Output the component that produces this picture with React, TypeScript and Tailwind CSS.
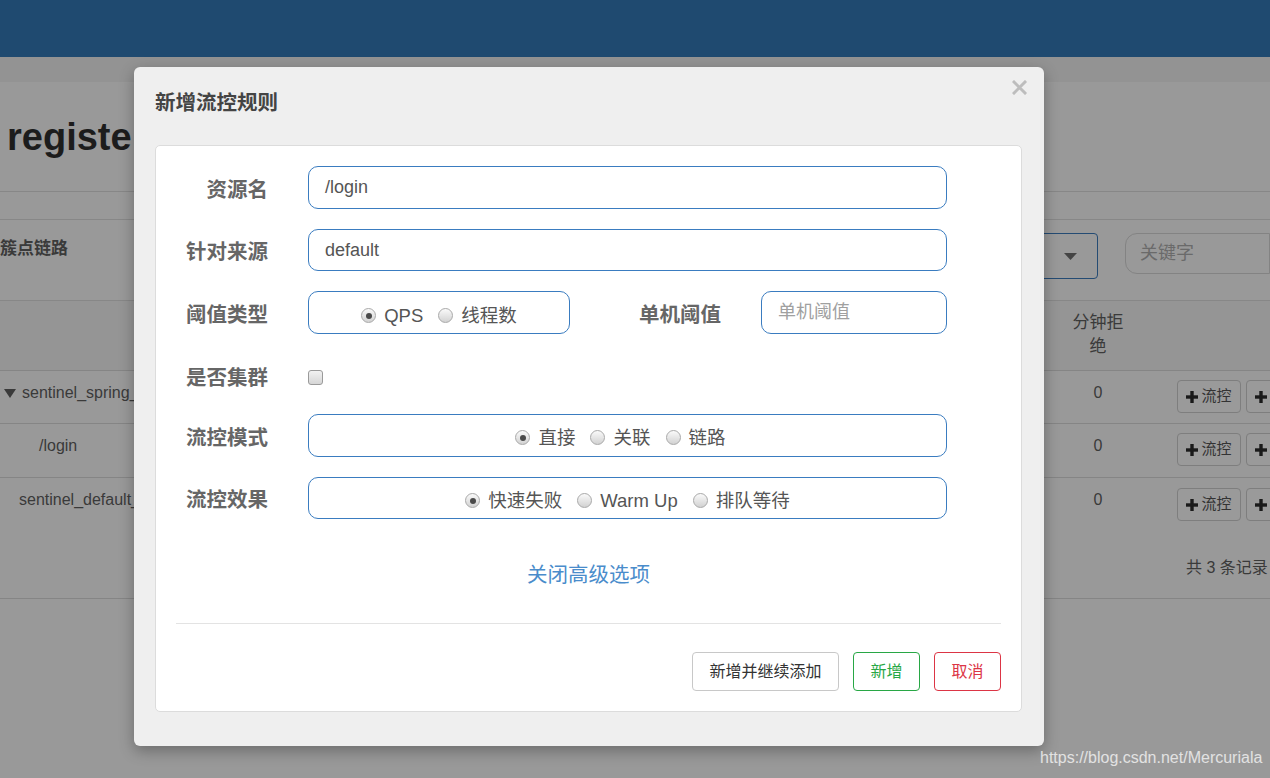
import React from "react";

const FONT = "font-['Liberation_Sans','Noto_Sans_CJK_SC',sans-serif]";

function Radio({ checked }: { checked?: boolean }) {
  return (
    <span className="inline-flex w-[15px] h-[15px] rounded-full border border-[#a9a9a9] bg-linear-to-b from-[#fafafa] to-[#d2d2d2] items-center justify-center shrink-0">
      {checked && <span className="w-[6px] h-[6px] rounded-full bg-[#4a4a4a]" />}
    </span>
  );
}

function Opt({ label, checked }: { label: string; checked?: boolean }) {
  return (
    <span className="inline-flex items-center gap-[8px]">
      <Radio checked={checked} />
      <span className="text-[18.5px] text-[#555]">{label}</span>
    </span>
  );
}

function Label({ children, w = "w-[112px]" }: { children: React.ReactNode; w?: string }) {
  return (
    <div className={`${w} shrink-0 text-right text-[20.5px] leading-[28px] font-bold text-[#666] pt-[4px]`}>{children}</div>
  );
}

function PlusBtn() {
  return (
    <span className="inline-flex items-center gap-[3px] h-[33px] w-[64px] justify-center border border-[#7e7e7e] rounded-[4px] bg-[#9a9a9a] shrink-0">
      <svg width="12" height="12" viewBox="0 0 12 12">
        <rect x="4.3" y="0" width="3.4" height="12" fill="#1a1a1a" />
        <rect x="0" y="4.3" width="12" height="3.4" fill="#1a1a1a" />
      </svg>
      <span className="text-[15px] text-[#333]">流控</span>
    </span>
  );
}

function TableRow({ h, name, pl }: { h: string; name: string; pl: string }) {
  return (
    <div className={`flex ${h} border-b border-[#858585]`}>
      <div className={`flex-1 ${pl} pt-[12px] text-[16px] text-[#3a3a3a] leading-[20px] flex items-start gap-[6px]`}>
        {name === "sentinel_spring_web" ? (
          <>
            <svg width="12" height="10" viewBox="0 0 12 10" className="mt-[6px]">
              <polygon points="0,0 12,0 6,9" fill="#3a3a3a" />
            </svg>
            <span>sentinel_spring_web_context</span>
          </>
        ) : (
          <span>{name}</span>
        )}
      </div>
      <div className="w-[74px] text-center pt-[12px] text-[16px] leading-[20px] text-[#3a3a3a]">0</div>
      <div className="w-[135px] pl-[42px] pt-[9px] flex gap-[5px] overflow-hidden">
        <PlusBtn />
        <PlusBtn />
      </div>
    </div>
  );
}

export default function App() {
  return (
    <div className={`relative w-[1270px] h-[778px] overflow-hidden bg-[#999999] ${FONT}`}>
      {/* background page (dimmed) */}
      <div className="h-[57px] bg-[#1f4a70]" />
      <div className="h-[25px] bg-[#939393]" />
      <div className="h-[110px] border-b border-[#878787] flex items-center pl-[7px] pt-[2px]">
        <span className="text-[38px] font-bold text-[#1c1c1c] whitespace-nowrap">registe</span>
      </div>
      <div className="h-[28px] border-b border-[#878787]" />
      <div className="h-[81px] border-b border-[#878787] flex">
        <div className="flex-1 pt-[19px] text-[17px] font-bold text-[#3a3a3a] leading-[20px]">簇点链路</div>
        <div className="pt-[13px] flex gap-[27px]">
          <div className="w-[120px] h-[46px] border border-[#244b73] rounded-[4px] flex items-center justify-end pr-[20px]">
            <svg width="13" height="7" viewBox="0 0 13 7">
              <polygon points="0,0 13,0 6.5,7" fill="#444" />
            </svg>
          </div>
          <div className="w-[145px] h-[41px] border border-[#838383] rounded-l-[12px] flex items-center pl-[14px] text-[18px] text-[#6a6a6a]">
            关键字
          </div>
        </div>
      </div>
      <div className="h-[70px] border-b border-[#858585] bg-[#959595] flex">
        <div className="flex-1" />
        <div className="w-[74px] pt-[10px] text-center text-[17px] leading-[24px] text-[#3a3a3a]">
          分钟拒
          <br />绝
        </div>
        <div className="w-[135px]" />
      </div>
      <TableRow h="h-[53px]" name="sentinel_spring_web" pl="pl-[4px]" />
      <TableRow h="h-[54px]" name="/login" pl="pl-[39px]" />
      <div className="h-[121px] border-b border-[#858585] flex flex-col">
        <div className="flex h-[60px]">
          <div className="flex-1 pl-[19px] pt-[12px] text-[16px] leading-[20px] text-[#3a3a3a]">sentinel_default_context</div>
          <div className="w-[74px] text-center pt-[12px] text-[16px] leading-[20px] text-[#3a3a3a]">0</div>
          <div className="w-[135px] pl-[42px] pt-[10px] flex gap-[5px] overflow-hidden">
            <PlusBtn />
            <PlusBtn />
          </div>
        </div>
        <div className="flex justify-end pt-[20px]">
          <span className="w-[84px] overflow-hidden whitespace-nowrap text-[16px] text-[#3a3a3a] leading-[20px]">共 3 条记录</span>
        </div>
      </div>

      {/* modal */}
      <div className="absolute left-[134px] top-[67px] w-[910px] h-[679px] bg-[#efefef] rounded-[6px] shadow-[0_5px_15px_rgba(0,0,0,0.3)] flex flex-col">
        <svg className="absolute right-[17px] top-[13px]" width="15" height="15" viewBox="0 0 15 15">
          <path d="M2 2 L13 13 M13 2 L2 13" stroke="#bdbdbd" strokeWidth="3" strokeLinecap="square" />
        </svg>
        <div className="h-[78px] pl-[21px] pt-[22px] text-[20.5px] leading-[28px] font-bold text-[#444]">新增流控规则</div>
        <div className="ml-[21px] mr-[22px] h-[567px] bg-white border border-[#dcdcdc] rounded-[5px] flex flex-col pt-[20px]">
          {/* row 1 */}
          <div className="flex h-[43px] items-center">
            <Label>资源名</Label>
            <div className="ml-[40px] w-[639px] h-[43px] border border-[#3a7cc0] rounded-[10px] flex items-center pl-[16px] text-[18px] text-[#555]">
              /login
            </div>
          </div>
          {/* row 2 */}
          <div className="flex h-[42px] items-center mt-[20px]">
            <Label>针对来源</Label>
            <div className="ml-[40px] w-[639px] h-[42px] border border-[#3a7cc0] rounded-[10px] flex items-center pl-[16px] text-[18px] text-[#555]">
              default
            </div>
          </div>
          {/* row 3 */}
          <div className="flex h-[43px] items-center mt-[20px]">
            <Label>阈值类型</Label>
            <div className="ml-[40px] w-[262px] h-[43px] border border-[#3a7cc0] rounded-[10px] flex items-center justify-center gap-[15px] pt-[6px]">
              <Opt label="QPS" checked />
              <Opt label="线程数" />
            </div>
            <Label w="w-[151px]">单机阈值</Label>
            <div className="ml-[40px] w-[186px] h-[43px] border border-[#3a7cc0] rounded-[10px] flex items-center pl-[16px] text-[18px] text-[#a0a0a0]">
              单机阈值
            </div>
          </div>
          {/* row 4 */}
          <div className="flex h-[40px] items-center mt-[22px]">
            <Label>是否集群</Label>
            <div className="ml-[40px] mt-[2px] w-[15px] h-[15px] rounded-[3px] border border-[#9a9a9a] bg-linear-to-b from-[#f2f2f2] to-[#d6d6d6]" />
          </div>
          {/* row 5 */}
          <div className="flex h-[43px] items-center mt-[18px]">
            <Label>流控模式</Label>
            <div className="ml-[40px] w-[639px] h-[43px] border border-[#3a7cc0] rounded-[10px] flex items-center justify-center gap-[15px] pt-[4px] pr-[14px]">
              <Opt label="直接" checked />
              <Opt label="关联" />
              <Opt label="链路" />
            </div>
          </div>
          {/* row 6 */}
          <div className="flex h-[42px] items-center mt-[20px]">
            <Label>流控效果</Label>
            <div className="ml-[40px] w-[639px] h-[42px] border border-[#3a7cc0] rounded-[10px] flex items-center justify-center gap-[15px] pt-[5px]">
              <Opt label="快速失败" checked />
              <Opt label="Warm Up" />
              <Opt label="排队等待" />
            </div>
          </div>
          <div className="mt-[42px] h-[28px] leading-[28px] text-center text-[20.5px] text-[#4a8ccb]">关闭高级选项</div>
          <div className="mt-[34px] mx-[20px] border-t border-[#e3e3e3]" />
          <div className="mt-[28px] flex justify-end pr-[20px] gap-[14px]">
            <div className="w-[147px] h-[39px] border border-[#c8c8c8] rounded-[4px] flex items-center justify-center text-[16px] text-[#333]">
              新增并继续添加
            </div>
            <div className="w-[67px] h-[39px] border border-[#28a745] rounded-[4px] flex items-center justify-center text-[16px] text-[#28a745]">
              新增
            </div>
            <div className="w-[67px] h-[39px] border border-[#dc3545] rounded-[4px] flex items-center justify-center text-[16px] text-[#dc3545]">
              取消
            </div>
          </div>
        </div>
      </div>

      <div className="absolute left-[1040px] top-[748px] text-[16px] leading-[20px] text-[#e2e2e2] whitespace-nowrap">
        https://blog.csdn.net/Mercuriala
      </div>
    </div>
  );
}
